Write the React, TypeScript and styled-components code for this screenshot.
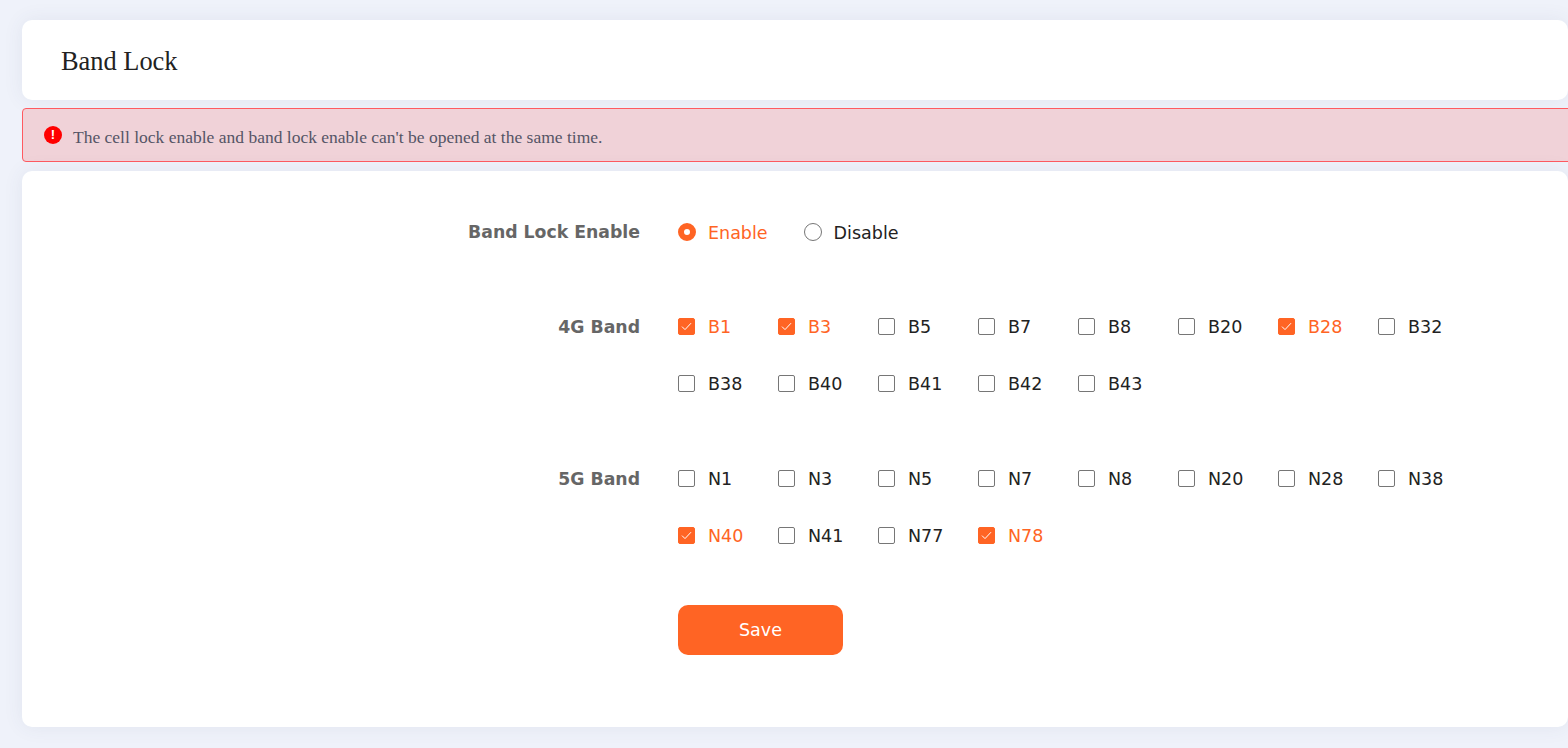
import React from 'react'
import { createGlobalStyle, styled } from 'styled-components'

const ORANGE = '#ff6424'

const bands4g = [
  { name: 'B1', on: true },
  { name: 'B3', on: true },
  { name: 'B5' },
  { name: 'B7' },
  { name: 'B8' },
  { name: 'B20' },
  { name: 'B28', on: true },
  { name: 'B32' },
  { name: 'B38' },
  { name: 'B40' },
  { name: 'B41' },
  { name: 'B42' },
  { name: 'B43' },
]

const bands5g = [
  { name: 'N1' },
  { name: 'N3' },
  { name: 'N5' },
  { name: 'N7' },
  { name: 'N8' },
  { name: 'N20' },
  { name: 'N28' },
  { name: 'N38' },
  { name: 'N40', on: true },
  { name: 'N41' },
  { name: 'N77' },
  { name: 'N78', on: true },
]

type Band = { name: string; on?: boolean }

const BandGrid = ({ bands }: { bands: Band[] }) => (
  <Grid>
    {bands.map(band => (
      <Option key={band.name} $on={band.on}>
        <Check $on={band.on}>
          {band.on && (
            <svg width='11' height='9' viewBox='0 0 11 9' fill='none'>
              <path d='M1 4.6 L4 7.6 L10 1.2' stroke='#fff' strokeWidth='1' />
            </svg>
          )}
        </Check>
        {band.name}
      </Option>
    ))}
  </Grid>
)

const App = () => (
  <Page>
    <GlobalStyle />
    <TitleCard>Band Lock</TitleCard>
    <Alert>
      <AlertIcon>!</AlertIcon>
      <AlertText>
        The cell lock enable and band lock enable can't be opened at the same time.
      </AlertText>
    </Alert>
    <MainCard>
      <RadioRow>
        <Label>Band Lock Enable</Label>
        <RadioGroup>
          <Option $on>
            <Radio $on />
            Enable
          </Option>
          <Option>
            <Radio />
            Disable
          </Option>
        </RadioGroup>
      </RadioRow>
      <BandRow>
        <Label>4G Band</Label>
        <BandGrid bands={bands4g} />
      </BandRow>
      <BandRow>
        <Label>5G Band</Label>
        <BandGrid bands={bands5g} />
      </BandRow>
      <SaveRow>
        <SaveButton>Save</SaveButton>
      </SaveRow>
    </MainCard>
  </Page>
)

const GlobalStyle = createGlobalStyle`
  html, body {
    margin: 0;
    padding: 0;
    height: 100%;
    overflow: hidden;
    background: #eff2fa;
  }
`

const Page = styled.div`
  width: 1546px;
  margin-left: 22px;
  padding-top: 20px;
  display: flex;
  flex-direction: column;
`

const TitleCard = styled.div`
  box-sizing: border-box;
  height: 80px;
  display: flex;
  align-items: center;
  padding: 2px 0 0 39px;
  background: #fff;
  border-radius: 10px;
  box-shadow: 0 0 20px rgba(60, 80, 120, 0.08);
  font-family: 'Liberation Serif', serif;
  font-size: 26.4px;
  color: #222;
`

const Alert = styled.div`
  box-sizing: border-box;
  width: 1560px;
  height: 54px;
  margin-top: 8px;
  display: flex;
  align-items: center;
  padding-left: 21px;
  background: #f0d2d8;
  border: 1px solid #ff5a60;
  border-radius: 4px;
  font-family: 'Liberation Serif', serif;
  font-size: 17.5px;
  color: #555566;
`

const AlertIcon = styled.span`
  width: 18px;
  height: 18px;
  margin-right: 11px;
  margin-top: -1px;
  border-radius: 50%;
  background: #ff0000;
  color: #fff;
  display: flex;
  align-items: center;
  justify-content: center;
  font-family: 'Liberation Sans', sans-serif;
  font-weight: 700;
  font-size: 13px;
`

const AlertText = styled.span`
  margin-top: 4px;
`

const MainCard = styled.div`
  height: 556px;
  box-sizing: border-box;
  margin-top: 9px;
  padding-top: 32px;
  background: #fff;
  border-radius: 10px;
  box-shadow: 0 0 20px rgba(60, 80, 120, 0.08);
  font-family: 'DejaVu Sans', sans-serif;
  font-size: 17.5px;
`

const RadioRow = styled.div`
  display: grid;
  grid-template-columns: 618px 1fr;
  column-gap: 38px;
  height: 58px;
  align-items: center;
  margin-bottom: 37px;
`

const BandRow = styled.div`
  display: grid;
  grid-template-columns: 618px 1fr;
  column-gap: 38px;
  margin-bottom: 38px;
`

const Label = styled.div`
  text-align: right;
  font-weight: 700;
  font-size: 17.3px;
  color: #666;
  line-height: 57px;
  margin-top: 1px;
`

const RadioGroup = styled.div`
  display: flex;
  gap: 36px;
  margin-top: 2px;
`

const Grid = styled.div`
  display: grid;
  grid-template-columns: repeat(8, 100px);
  grid-auto-rows: 57px;
  align-items: center;
`

const Option = styled.div<{ $on?: boolean }>`
  display: flex;
  align-items: center;
  gap: 13px;
  color: ${props => (props.$on ? ORANGE : '#222')};
`

const Check = styled.span<{ $on?: boolean }>`
  box-sizing: border-box;
  width: 17px;
  height: 17px;
  border-radius: 2px;
  display: flex;
  align-items: center;
  justify-content: center;
  background: ${props => (props.$on ? ORANGE : '#fff')};
  border: 1px solid ${props => (props.$on ? ORANGE : '#767676')};
`

const Radio = styled.span<{ $on?: boolean }>`
  box-sizing: border-box;
  width: 18px;
  height: 18px;
  margin: 0 -1px 2px 0;
  border-radius: 50%;
  background: #fff;
  border: ${props => (props.$on ? `6px solid ${ORANGE}` : '1px solid #767676')};
`

const SaveRow = styled.div`
  padding: 3px 0 0 656px;
`

const SaveButton = styled.button`
  width: 165px;
  height: 50px;
  border: none;
  border-radius: 10px;
  background: ${ORANGE};
  color: #fff;
  font-family: 'DejaVu Sans', sans-serif;
  font-size: 17.5px;
  font-weight: 500;
`

export default App
